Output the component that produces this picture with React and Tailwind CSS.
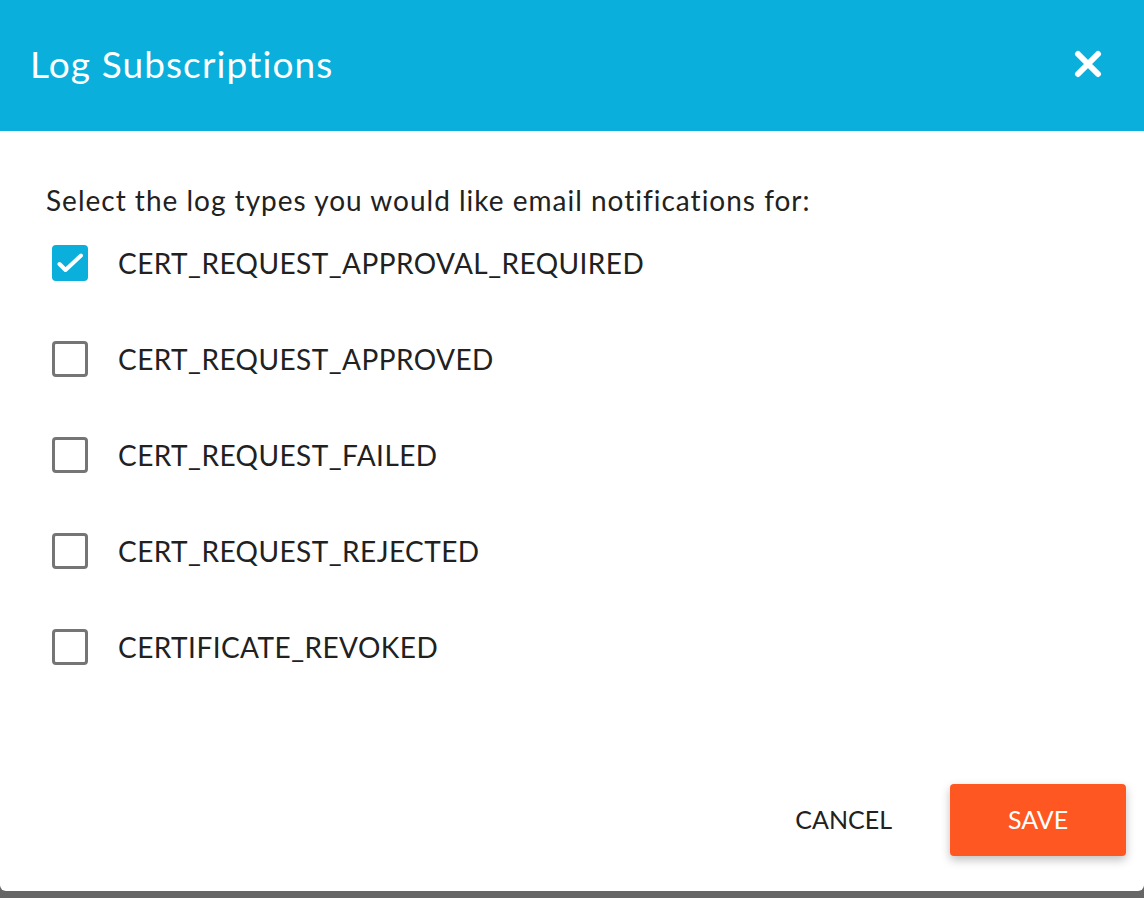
import { useState } from "react";

const LOG_TYPES = [
  "CERT_REQUEST_APPROVAL_REQUIRED",
  "CERT_REQUEST_APPROVED",
  "CERT_REQUEST_FAILED",
  "CERT_REQUEST_REJECTED",
  "CERTIFICATE_REVOKED"
];

function Checkbox({ checked, onChange }) {
  return (
    <button
      type="button"
      onClick={onChange}
      className={
        checked
          ? "flex h-[36px] w-[36px] shrink-0 items-center justify-center rounded-[4px] bg-[#0aafdb]"
          : "flex h-[36px] w-[36px] shrink-0 items-center justify-center rounded-[4px] border-[3px] border-[#757575] bg-white"
      }
    >
      {checked && (
        <svg width="36" height="36" viewBox="0 0 36 36" fill="none">
          <path
            d="M7.5 19l6 6L29 10.5"
            stroke="white"
            strokeWidth="4"
            strokeLinecap="round"
            strokeLinejoin="round"
          />
        </svg>
      )}
    </button>
  );
}

export default function App() {
  const [selected, setSelected] = useState(["CERT_REQUEST_APPROVAL_REQUIRED"]);

  const toggle = (type) => {
    setSelected((prev) =>
      prev.includes(type) ? prev.filter((t) => t !== type) : [...prev, type]
    );
  };

  return (
    <div className="h-[898px] w-full bg-[#666666] font-['Lato',sans-serif]">
      <div className="flex h-[891px] flex-col overflow-hidden rounded-b-[6px] bg-white">
        <div className="flex h-[131px] shrink-0 items-center justify-between bg-[#0aafdb] pb-[4px] pl-[30px] pr-[42px]">
          <h2 className="text-[37px] font-normal tracking-[1.1px] text-white">Log Subscriptions</h2>
          <button type="button" aria-label="Close" className="flex items-center justify-center">
            <svg width="28" height="28" viewBox="0 0 28 28" fill="none">
              <path
                d="M4 4l20 20M24 4L4 24"
                stroke="white"
                strokeWidth="6"
                strokeLinecap="round"
              />
            </svg>
          </button>
        </div>

        <div className="flex flex-1 flex-col px-[46px] pt-[49px]">
          <p className="text-[28px] leading-[40px] tracking-[1px] text-[#212121]">
            Select the log types you would like email notifications for:
          </p>
          <div className="mt-[25px] flex flex-col gap-[60px] pl-[6px]">
            {LOG_TYPES.map((type) => (
              <label key={type} className="flex h-[36px] items-center gap-[30px]">
                <Checkbox checked={selected.includes(type)} onChange={() => toggle(type)} />
                <span className="text-[28px] tracking-[0.45px] text-[#212121]">{type}</span>
              </label>
            ))}
          </div>
        </div>

        <div className="flex items-center justify-end gap-[34px] pb-[35px] pr-[18px]">
          <button type="button" className="h-[72px] px-[24px] text-[25px] text-[#212121]">
            CANCEL
          </button>
          <button
            type="button"
            className="h-[72px] w-[176px] rounded-[4px] bg-[#ff5722] text-[25px] text-white shadow-[0_4px_10px_rgba(0,0,0,0.25)]"
          >
            SAVE
          </button>
        </div>
      </div>
    </div>
  );
}
